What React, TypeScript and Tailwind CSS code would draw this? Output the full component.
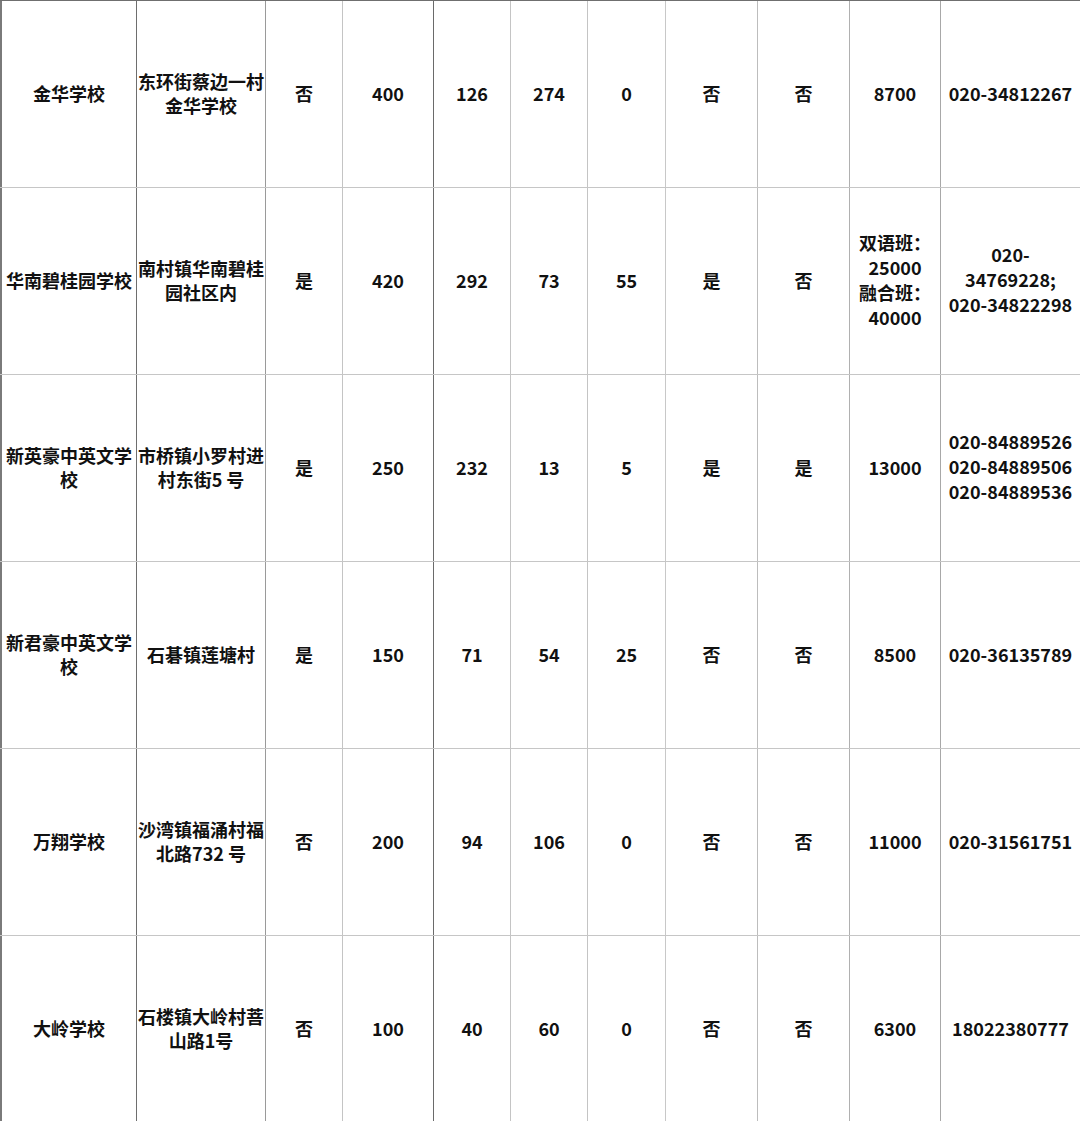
import React from 'react';

type Row = string[][];

const widths = [136, 129, 77, 91, 77, 77, 78, 92, 92, 91, 140];

// vertical line colour on the left edge of each column (index 0 = outer edge)
const lineColors = [
  'border-l-[#7a7a7a]',
  'border-l-[#6e6e6e]',
  'border-l-[#9a9a9a]',
  'border-l-[#c4c4c4]',
  'border-l-[#6a6a6a]',
  'border-l-[#c4c4c4]',
  'border-l-[#c4c4c4]',
  'border-l-[#c8c8c8]',
  'border-l-[#bdbdbd]',
  'border-l-[#b0b0b0]',
  'border-l-[#a8a8a8]',
];

const rows: Row[] = [
  [['金华学校'], ['东环街蔡边一村', '金华学校'], ['否'], ['400'], ['126'], ['274'], ['0'], ['否'], ['否'], ['8700'], ['020-34812267']],
  [['华南碧桂园学校'], ['南村镇华南碧桂', '园社区内'], ['是'], ['420'], ['292'], ['73'], ['55'], ['是'], ['否'], ['双语班：', '25000', '融合班：', '40000'], ['020-', '34769228;', '020-34822298']],
  [['新英豪中英文学', '校'], ['市桥镇小罗村进', '村东街5 号'], ['是'], ['250'], ['232'], ['13'], ['5'], ['是'], ['是'], ['13000'], ['020-84889526', '020-84889506', '020-84889536']],
  [['新君豪中英文学', '校'], ['石碁镇莲塘村'], ['是'], ['150'], ['71'], ['54'], ['25'], ['否'], ['否'], ['8500'], ['020-36135789']],
  [['万翔学校'], ['沙湾镇福涌村福', '北路732 号'], ['否'], ['200'], ['94'], ['106'], ['0'], ['否'], ['否'], ['11000'], ['020-31561751']],
  [['大岭学校'], ['石楼镇大岭村菩', '山路1号'], ['否'], ['100'], ['40'], ['60'], ['0'], ['否'], ['否'], ['6300'], ['18022380777']],
];

export default function App() {
  return (
    <div
      className="w-[1080px] h-[1121px] overflow-hidden bg-white text-[#111] font-bold"
      style={{ fontFamily: '"Noto Sans CJK SC", "Noto Sans", sans-serif' }}
    >
      <div className="border-t border-t-[#6f6f6f]">
        {rows.map((row, ri) => (
          <div
            key={ri}
            className={`flex h-[187px] ${ri < rows.length - 1 ? 'border-b border-b-[#c6c6c6]' : ''}`}
          >
            {row.map((cell, ci) => (
              <div
                key={ci}
                className={`flex flex-col items-center justify-center text-center shrink-0 pb-[3px] border-l ${ci === 0 ? 'border-l-2' : ''} ${lineColors[ci]} ${cell.length > 2 ? 'leading-[25px]' : 'leading-[24px]'} text-[18px]`}
                style={{ width: widths[ci] }}
              >
                {cell.map((line, li) => (
                  <span key={li} className="whitespace-nowrap">
                    {line}
                  </span>
                ))}
              </div>
            ))}
          </div>
        ))}
      </div>
    </div>
  );
}
